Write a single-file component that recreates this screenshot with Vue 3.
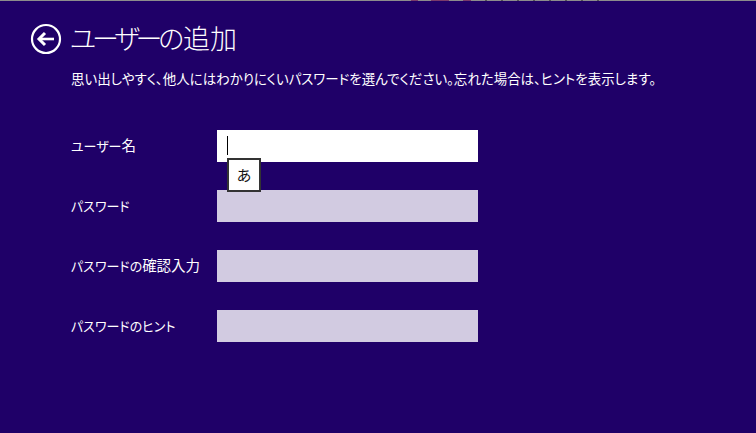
<script setup>
const fields = [
  { kana: 'ユーザー', kanji: '名', active: true },
  { kana: 'パスワード', kanji: '' },
  { kana: 'パスワードの', kanji: '確認入力' },
  { kana: 'パスワードのヒント', kanji: '' }
]
</script>

<template>
  <div class="page">
    <div class="top-strip"></div>
    <header class="head">
      <svg class="back" width="32" height="32" viewBox="0 0 32 32">
        <circle cx="16" cy="16" r="14" fill="none" stroke="#fff" stroke-width="2.2" />
        <path d="M15 10 L9 16 L15 22" fill="none" stroke="#fff" stroke-width="3" />
        <path d="M10 16 H24" fill="none" stroke="#fff" stroke-width="2.6" />
      </svg>
      <h1 class="title"><span class="title-kana">ユーザーの</span>追加</h1>
    </header>
    <p class="desc">思い出しやすく、他人にはわかりにくいパスワードを選んでください。忘れた場合は、ヒントを表示します。</p>
    <div class="form">
      <div v-for="f in fields" :key="f.kana" class="row">
        <label class="label">{{ f.kana }}<span class="label-kanji">{{ f.kanji }}</span></label>
        <div class="input" :class="{ active: f.active }">
          <template v-if="f.active">
            <span class="caret"></span>
            <span class="ime">あ</span>
          </template>
        </div>
      </div>
    </div>
  </div>
</template>

<style>
html, body {
  margin: 0;
  background: #1f0068;
}
</style>

<style scoped>
.page {
  width: 756px;
  height: 433px;
  overflow: hidden;
  background: #1f0068;
  color: #fff;
  font-family: "Noto Sans CJK JP", "Noto Sans", sans-serif;
  font-feature-settings: "palt";
}

.top-strip {
  height: 1px;
  background:
    linear-gradient(90deg, transparent 411px, #7a3a6a 411px, #7a3a6a 418px, transparent 418px, transparent 431px, #7a3a6a 431px, #7a3a6a 449px, transparent 449px, transparent 463px, #7a3a6a 463px, #7a3a6a 471px, transparent 471px),
    repeating-linear-gradient(90deg, #555 0, #555 2px, transparent 2px, transparent 16px) 485px 0 / 127px 1px no-repeat,
    #8c8c8c;
}

.head {
  display: flex;
  align-items: center;
  gap: 8px;
  padding: 22px 0 0 30px;
  height: 32px;
}

.back {
  display: block;
}

.title {
  margin: -2px 0 0;
  font-size: 27px;
  font-weight: 300;
  line-height: 32px;
}

.title-kana {
  letter-spacing: -4.2px;
  margin-right: 3px;
}

.desc {
  margin: 13px 0 0 71px;
  font-size: 13.47px;
  line-height: 20px;
  white-space: nowrap;
}

.form {
  display: flex;
  flex-direction: column;
  gap: 28px;
  margin-top: 42px;
}

.row {
  display: flex;
  align-items: center;
  padding-left: 71px;
}

.label {
  width: 146px;
  font-size: 13px;
  line-height: 32px;
  margin-top: -1px;
}

.label-kanji {
  font-size: 14.5px;
}

.input {
  position: relative;
  width: 261px;
  height: 32px;
  background: #d2cbe1;
}

.input.active {
  background: #fff;
}

.caret {
  position: absolute;
  left: 10px;
  top: 6px;
  width: 1px;
  height: 19px;
  background: #000;
}

.ime {
  position: absolute;
  left: 10px;
  top: 28px;
  z-index: 1;
  box-sizing: border-box;
  width: 34px;
  height: 34px;
  border: 2px solid #333;
  background: #fff;
  color: #111;
  font-size: 15px;
  line-height: 30px;
  text-align: center;
}
</style>
